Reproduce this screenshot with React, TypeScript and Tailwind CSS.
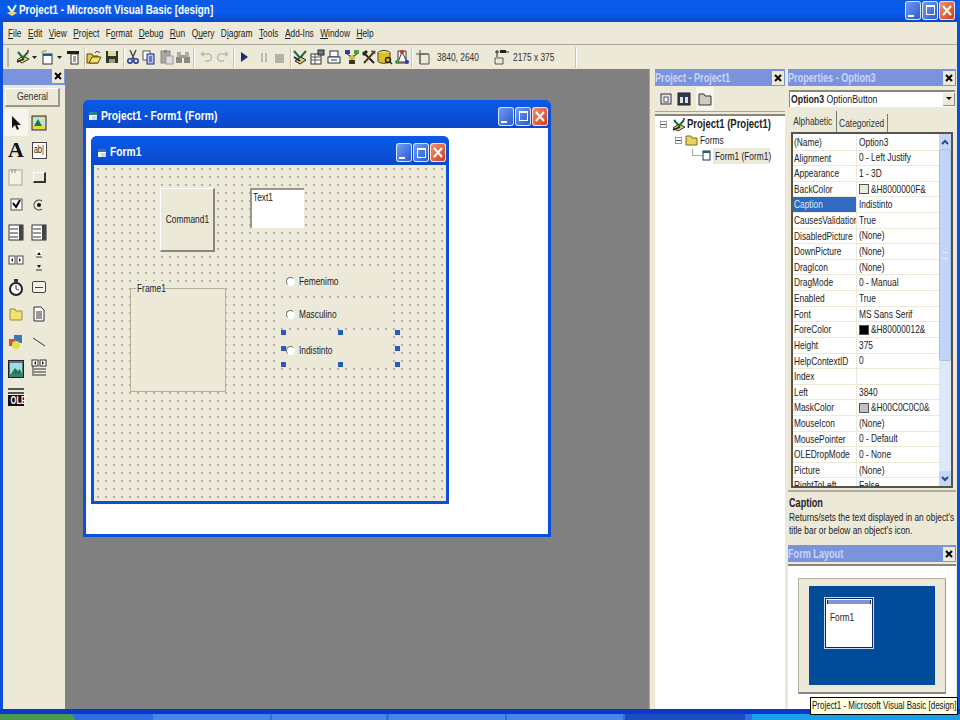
import type { ReactNode } from 'react';

// the screenshot is squeezed horizontally, so text gets squeezed the same way
function S({ children, center = false }: { children: ReactNode; center?: boolean }) {
  return (
    <span className={`inline-block shrink-0 whitespace-nowrap scale-x-[0.76] ${center ? 'origin-center' : 'origin-left'}`}>
      {children}
    </span>
  );
}

function Svg({ children, w = 16, h = 16, className = '' }: { children: ReactNode; w?: number; h?: number; className?: string }) {
  return (
    <svg width={w} height={h} viewBox={`0 0 ${w} ${h}`} className={`shrink-0 ${className}`}>
      {children}
    </svg>
  );
}

function VbIcon() {
  return (
    <Svg>
      <path d="M2 11l5 3 7-4-6-3z" fill="#e8d060" stroke="#333" />
      <path d="M3 3l5 6 5-6" fill="none" stroke="#1c6b3a" strokeWidth="2" />
      <path d="M2 13l7-3" stroke="#222" strokeWidth="1.5" />
      <rect x="12" y="1" width="2" height="2" fill="#d03030" />
    </Svg>
  );
}

function FormIcon() {
  return (
    <Svg>
      <rect x="3" y="5" width="9" height="10" fill="#fff" stroke="#234" />
      <rect x="3" y="5" width="9" height="2" fill="#1f5f8a" />
      <path d="M3 1l1 2M1 3l2 1M6 1L5 3" stroke="#7ac040" strokeWidth="1.3" />
    </Svg>
  );
}

function MenuIcon() {
  return (
    <Svg>
      <rect x="2" y="2" width="12" height="3" fill="#1b1b1b" />
      <rect x="6" y="5" width="7" height="10" fill="#fff" stroke="#333" />
      <path d="M8 8h3M8 10h3M8 12h3" stroke="#444" />
    </Svg>
  );
}

function OpenIcon() {
  return (
    <Svg>
      <path d="M1 5h5l1 2h5v7H1z" fill="#e6c848" stroke="#5a4a10" />
      <path d="M3 14l3-6h9l-3 6z" fill="#f4e070" stroke="#5a4a10" />
      <path d="M9 4c1-2 3-2 5 0" fill="none" stroke="#222" />
    </Svg>
  );
}

function SaveIcon() {
  return (
    <Svg>
      <rect x="2" y="2" width="12" height="12" fill="#2f3a22" />
      <rect x="4" y="2" width="8" height="5" fill="#e0d8a0" />
      <rect x="5" y="10" width="6" height="4" fill="#9a9a88" />
    </Svg>
  );
}

function CutIcon() {
  return (
    <Svg>
      <path d="M5 1l4 9M11 1L7 10" stroke="#444" strokeWidth="1.4" />
      <circle cx="5" cy="12" r="2.2" fill="none" stroke="#2038a8" strokeWidth="1.5" />
      <circle cx="11" cy="12" r="2.2" fill="none" stroke="#2038a8" strokeWidth="1.5" />
    </Svg>
  );
}

function CopyIcon() {
  return (
    <Svg>
      <rect x="2" y="2" width="7" height="9" fill="#fff" stroke="#555" />
      <rect x="6" y="5" width="7" height="10" fill="#b8c8f0" stroke="#1e2a80" />
      <path d="M8 8h3M8 10h3M8 12h3" stroke="#1e2a80" />
    </Svg>
  );
}

function PasteIcon() {
  return (
    <Svg>
      <rect x="2" y="2" width="9" height="12" fill="#aaa99c" stroke="#888" />
      <rect x="5" y="1" width="3" height="3" fill="#888" />
      <rect x="7" y="7" width="7" height="8" fill="#ddd" stroke="#999" />
    </Svg>
  );
}

function FindIcon() {
  return (
    <Svg>
      <rect x="2" y="3" width="4" height="6" fill="#aaa" />
      <rect x="10" y="3" width="4" height="6" fill="#aaa" />
      <rect x="1" y="8" width="6" height="6" fill="#8a8a80" />
      <rect x="9" y="8" width="6" height="6" fill="#8a8a80" />
      <rect x="6" y="6" width="4" height="3" fill="#a09a90" />
    </Svg>
  );
}

function UndoIcon({ flip = false }: { flip?: boolean }) {
  return (
    <Svg className={flip ? '-scale-x-100' : ''}>
      <path d="M4 5h6a3 3 0 0 1 0 7H7" fill="none" stroke="#bdbbad" strokeWidth="1.5" />
      <path d="M6 2v6L2 5z" fill="#bdbbad" />
    </Svg>
  );
}

function ToolbarGroupIcons({ name }: { name: string }) {
  if (name === 'project') {
    return (
      <Svg>
        <path d="M2 2l6 7 6-7" fill="none" stroke="#1c6b3a" strokeWidth="2" />
        <path d="M3 12l5 3 6-4-5-3z" fill="#dcc860" stroke="#223" />
        <path d="M2 8l6 4" stroke="#1a2a6a" strokeWidth="2" />
      </Svg>
    );
  }
  if (name === 'props') {
    return (
      <Svg>
        <rect x="2" y="5" width="10" height="10" fill="#fff" stroke="#333" />
        <path d="M2 8h10M2 11h10M6 5v10" stroke="#555" />
        <rect x="9" y="1" width="6" height="5" fill="#6a7a8a" stroke="#223" />
      </Svg>
    );
  }
  if (name === 'layout') {
    return (
      <Svg>
        <rect x="4" y="2" width="8" height="6" fill="#fff" stroke="#234" />
        <rect x="2" y="8" width="12" height="6" fill="#fff" stroke="#234" />
        <path d="M5 11h6" stroke="#234" />
      </Svg>
    );
  }
  if (name === 'browser') {
    return (
      <Svg>
        <rect x="1" y="1" width="5" height="4" fill="#2a40a0" />
        <rect x="10" y="1" width="5" height="4" fill="#50a030" />
        <rect x="5" y="6" width="6" height="4" fill="#c8c040" />
        <rect x="5" y="11" width="6" height="4" fill="#403820" />
        <path d="M3 5l3 2M13 5l-3 2M8 10v2" stroke="#222" />
      </Svg>
    );
  }
  if (name === 'toolbox') {
    return (
      <Svg>
        <path d="M2 3l11 11" stroke="#222" strokeWidth="2" />
        <path d="M14 2L3 14" stroke="#5a3a14" strokeWidth="2" />
        <path d="M1 5l4-4 2 2-4 4z" fill="#222" />
        <path d="M11 1l4 3-2 1-3-2z" fill="#555" />
      </Svg>
    );
  }
  if (name === 'data') {
    return (
      <Svg>
        <ellipse cx="7" cy="4" rx="6" ry="2.5" fill="#f0d840" stroke="#444" />
        <path d="M1 4v8c0 3 12 3 12 0V4" fill="#e0c020" stroke="#444" />
        <circle cx="11" cy="11" r="2.5" fill="none" stroke="#222" strokeWidth="1.4" />
        <path d="M13 13l2 2" stroke="#222" strokeWidth="1.5" />
      </Svg>
    );
  }
  return (
    <Svg>
      <path d="M4 2h8v12H4z" fill="#fff" stroke="#333" />
      <path d="M8 3L4 13h9z" fill="none" stroke="#333" />
      <circle cx="8" cy="3" r="2" fill="#c03030" />
      <circle cx="3" cy="13" r="2" fill="#30a040" />
      <circle cx="13" cy="13" r="2" fill="#2038c0" />
    </Svg>
  );
}

function Sep() {
  return <div className="w-[2px] h-[21px] bg-[#c8c4b0] border-r border-white shrink-0" />;
}

function Arrow() {
  return (
    <Svg w={7} h={16}>
      <path d="M1 7h5L3.500 10z" fill="#222" />
    </Svg>
  );
}

function Toolbar() {
  return (
    <div className="h-[25px] shrink-0 flex items-center pl-[4px] bg-[#ece9d8] border-t border-[#aca899] text-[#333]">
      <div className="w-[2px] h-[19px] bg-[#b8b4a0] mr-[6px]" />
      <VbIcon />
      <Arrow />
      <div className="w-[2px]" />
      <FormIcon />
      <Arrow />
      <div className="w-[2px]" />
      <MenuIcon />
      <div className="w-[3px]" />
      <Sep />
      <OpenIcon />
      <div className="w-[2px]" />
      <SaveIcon />
      <div className="w-[3px]" />
      <Sep />
      <CutIcon />
      <CopyIcon />
      <div className="w-[2px]" />
      <PasteIcon />
      <FindIcon />
      <div className="w-[2px]" />
      <Sep />
      <div className="w-[3px]" />
      <UndoIcon />
      <div className="w-[1px]" />
      <UndoIcon flip />
      <div className="w-[2px]" />
      <Sep />
      <div className="w-[2px]" />
      <Svg>
        <path d="M4 3l7 5-7 5z" fill="#1a2a78" />
      </Svg>
      <div className="w-[3px]" />
      <Svg>
        <path d="M5 4h2v9H5zM9 4h2v9H9z" fill="#bdbbad" />
      </Svg>
      <Svg>
        <rect x="3" y="5" width="9" height="9" fill="#b4b2a4" />
      </Svg>
      <div className="w-[2px]" />
      <Sep />
      <ToolbarGroupIcons name="project" />
      <div className="w-[1px]" />
      <ToolbarGroupIcons name="props" />
      <div className="w-[1px]" />
      <ToolbarGroupIcons name="layout" />
      <div className="w-[2px]" />
      <ToolbarGroupIcons name="browser" />
      <div className="w-[1px]" />
      <ToolbarGroupIcons name="toolbox" />
      <ToolbarGroupIcons name="data" />
      <div className="w-[1px]" />
      <ToolbarGroupIcons name="comp" />
      <div className="w-[1px]" />
      <Sep />
      <div className="w-[2px]" />
      <Svg>
        <path d="M1 5h12M5 1v14M5 5h9v10H5z" fill="none" stroke="#555" />
      </Svg>
      <div className="ml-[6px] w-[56px] text-[11px]"><S>3840, 2640</S></div>
      <Svg>
        <path d="M2 9h8v6H2z" fill="none" stroke="#555" />
        <path d="M4 1v7M2 3h4M11 3h5" stroke="#222" />
        <rect x="7" y="1" width="6" height="3" fill="#222" />
      </Svg>
      <div className="ml-[4px] w-[62px] text-[11px]"><S>2175 x 375</S></div>
      <Sep />
    </div>
  );
}

function WinButtons() {
  const base = 'w-[16px] h-[19px] rounded-[3px] border border-white/80 flex items-center justify-center';
  return (
    <div className="flex gap-[1px] items-center">
      <div className={`${base} bg-gradient-to-br from-[#6f9cf0] to-[#2a5ad0] items-end pb-[2px] justify-start pl-[2px]`}>
        <div className="w-[6px] h-[2px] bg-white" />
      </div>
      <div className={`${base} bg-gradient-to-br from-[#6f9cf0] to-[#2a5ad0]`}>
        <div className="w-[9px] h-[10px] border border-white border-t-2" />
      </div>
      <div className={`${base} bg-gradient-to-br from-[#f09070] to-[#d03a10]`}>
        <svg width="10" height="11" viewBox="0 0 10 11">
          <path d="M1 1l8 9M9 1l-8 9" stroke="#fff" strokeWidth="2" />
        </svg>
      </div>
    </div>
  );
}

function WinIcon() {
  return (
    <Svg w={10} h={10}>
      <rect x="1" y="1" width="8" height="8" fill="#fff" />
      <rect x="1" y="1" width="8" height="3" fill="#2f7f90" />
      <rect x="4" y="5" width="5" height="4" fill="#c8d8e8" />
    </Svg>
  );
}

function DockTitle({ label }: { label: string }) {
  return (
    <div className="h-[17px] shrink-0 bg-[#7b93dd] flex items-center justify-between text-[#c8d6f8] text-[12px] font-bold leading-none">
      <S>{label}</S>
      <CloseBox />
    </div>
  );
}

function CloseBox() {
  return (
    <div className="w-[12px] h-[14px] bg-[#ece9d8] flex items-center justify-center mr-[1px]">
      <svg width="8" height="8" viewBox="0 0 8 8">
        <path d="M1 1l6 6M7 1L1 7" stroke="#000" strokeWidth="2" />
      </svg>
    </div>
  );
}

function Toolbox() {
  const cell = 'flex items-center justify-center';
  return (
    <div className="w-[62px] shrink-0 bg-[#ece9d8] flex flex-col">
      <div className="h-[16px] bg-[#7b93dd] flex justify-end">
        <CloseBox />
      </div>
      <div className="mt-[3px] ml-[2px] w-[55px] h-[19px] bg-[#ece9d8] border-t border-l border-white border-r-2 border-b-2 border-r-[#9a9788] border-b-[#9a9788] text-[11.500px] text-[#333] flex items-center justify-center">
        <S center>General</S>
      </div>
      <div className="mt-[2px] ml-[1px] grid grid-cols-[24px_22px] auto-rows-[27.400px]">
        <div className={`${cell} bg-[#f6f5ee]`}>
          <Svg>
            <path d="M4 1v12l3-3 2 5 2-1-2-4h4z" fill="#111" />
          </Svg>
        </div>
        <div className={cell}>
          <Svg>
            <rect x="1" y="1" width="14" height="14" fill="#e8d838" stroke="#225" />
            <rect x="2" y="3" width="12" height="8" fill="#bfe0f0" />
            <path d="M3 11l4-7 4 7z" fill="#1a7a40" />
            <circle cx="12" cy="5" r="2" fill="#f0e060" />
          </Svg>
        </div>
        <div className={`${cell} text-[22px] font-bold text-[#111] [font-family:'Liberation_Serif',serif] leading-none`}>A</div>
        <div className={cell}>
          <div className="w-[15px] h-[17px] bg-white border border-[#444] text-[10px] leading-none flex items-center justify-center text-[#222]"><S center>ab|</S></div>
        </div>
        <div className={cell}>
          <Svg h={18}>
            <rect x="1" y="2" width="13" height="15" fill="#f4f2e6" stroke="#aaa78f" />
            <path d="M4 1v4M7 1v4" stroke="#888" />
          </Svg>
        </div>
        <div className={cell}>
          <div className="w-[13px] h-[11px] border-r-2 border-b-2 border-[#333] bg-[#ece9d8] border-t border-l border-t-white border-l-white" />
        </div>
        <div className={cell}>
          <Svg>
            <rect x="3" y="2" width="11" height="11" fill="#fff" stroke="#555" />
            <path d="M5 6l3 4 4-7" fill="none" stroke="#000" strokeWidth="2" />
          </Svg>
        </div>
        <div className={cell}>
          <Svg>
            <path d="M11 4a5 5 0 1 0 0 8" fill="none" stroke="#555" strokeWidth="1.200" />
            <circle cx="8" cy="8" r="2" fill="#111" />
          </Svg>
        </div>
        {[0, 1].map(i => (
          <div key={i} className={cell}>
            <Svg h={17} w={16}>
              <rect x="1" y="1" width="14" height="15" fill="#fff" stroke="#333" />
              <path d="M2 5h8M2 9h8M2 13h8" stroke="#333" />
              <rect x="11" y="1" width="4" height="15" fill="#444" />
            </Svg>
          </div>
        ))}
        <div className={cell}>
          <Svg h={10}>
            <rect x="1" y="1" width="6" height="8" fill="#fff" stroke="#444" />
            <rect x="9" y="1" width="6" height="8" fill="#fff" stroke="#444" />
            <path d="M5 3v4L3 5zM11 3v4l2-2z" fill="#111" />
          </Svg>
        </div>
        <div className={cell}>
          <Svg w={10} h={22}>
            <rect x="2" y="1" width="6" height="7" fill="#fff" />
            <path d="M2 8h6M2 21h6" stroke="#333" />
            <path d="M3 6l2-3 2 3zM3 16l2 3 2-3z" fill="#111" />
          </Svg>
        </div>
        <div className={cell}>
          <Svg h={20}>
            <circle cx="8" cy="12" r="6" fill="#fff" stroke="#222" strokeWidth="2" />
            <path d="M8 12V8M8 12l3 1" stroke="#444" />
            <rect x="6" y="2" width="4" height="3" fill="#333" />
          </Svg>
        </div>
        <div className={cell}>
          <div className="w-[14px] h-[12px] bg-[#f4f2e6] border border-[#444] rounded-[2px] flex items-center justify-center">
            <div className="w-[8px] h-[1px] bg-[#444]" />
          </div>
        </div>
        <div className={cell}>
          <Svg>
            <path d="M2 3h5l1 2h6v9H2z" fill="#f0e070" stroke="#a09030" />
          </Svg>
        </div>
        <div className={cell}>
          <Svg>
            <path d="M3 1h7l3 3v11H3z" fill="#fff" stroke="#333" />
            <path d="M5 6h6M5 8h6M5 10h6M5 12h6" stroke="#333" />
          </Svg>
        </div>
        <div className={cell}>
          <Svg>
            <rect x="6" y="1" width="8" height="8" fill="#3a78b0" />
            <rect x="1" y="5" width="7" height="7" fill="#d05050" />
            <circle cx="8" cy="11" r="4" fill="#e8e040" />
          </Svg>
        </div>
        <div className={cell}>
          <Svg>
            <path d="M2 4l12 8" stroke="#333" />
          </Svg>
        </div>
        <div className={cell}>
          <Svg h={18} w={16}>
            <rect x="0.500" y="0.500" width="15" height="17" fill="#4a7a80" stroke="#222" />
            <rect x="2" y="3" width="12" height="11" fill="#a8d8e8" />
            <path d="M3 14l4-6 3 3 2-2 2 5z" fill="#1a8040" />
          </Svg>
        </div>
        <div className={cell}>
          <Svg h={20}>
            <rect x="1" y="1" width="6" height="6" fill="#fff" stroke="#333" />
            <rect x="9" y="1" width="6" height="6" fill="#fff" stroke="#333" />
            <path d="M5 2v4L3 4zM11 2v4l2-2z" fill="#111" />
            <path d="M3 10h12M3 13h12M3 16h12M2 7v10" stroke="#333" />
          </Svg>
        </div>
        <div className={cell}>
          <div className="w-[16px] h-[18px] flex flex-col justify-end border-t-[6px] border-double border-[#555]">
            <div className="bg-[#111] text-white text-[10px] font-bold leading-[11px] text-center"><S center>OLE</S></div>
          </div>
        </div>
      </div>
    </div>
  );
}

function Radio({ label, className }: { label: string; className: string }) {
  return (
    <div className={`absolute left-[185px] w-[114px] bg-[#ece9d8] flex items-center ${className}`}>
      <div className="ml-[7px] w-[9px] h-[9px] rounded-full bg-white border border-[#777] border-b-white border-r-white" />
      <div className="ml-[4px] text-[11px] text-[#222]"><S>{label}</S></div>
    </div>
  );
}

function Handle({ className }: { className: string }) {
  return <div className={`absolute w-[5px] h-[5px] bg-[#2b59b8] ${className}`} />;
}

function FormWindow() {
  return (
    <div className="absolute left-[18px] top-[31px] w-[468px] h-[437px] bg-[#0a50dc] rounded-t-[6px] p-[3px] pt-0 flex flex-col">
      <div className="h-[28px] shrink-0 flex items-center justify-between pt-[4px] -mx-[3px] pl-[5px] pr-[3px] rounded-t-[6px] bg-gradient-to-b from-[#0a5ae8] to-[#0a48cc]">
        <div className="flex items-center gap-[3px] text-white text-[13.500px] font-bold">
          <WinIcon />
          <S>Project1 - Form1 (Form)</S>
        </div>
        <WinButtons />
      </div>
      <div className="flex-1 bg-white pl-[5px] pt-[8px] relative">
        <div className="w-[358px] h-[368px] bg-[#0a50dc] rounded-t-[6px] p-[3px] pt-0 flex flex-col">
          <div className="h-[29px] shrink-0 flex items-center justify-between pt-[4px] -mx-[3px] pl-[6px] pr-[3px] rounded-t-[6px] bg-gradient-to-b from-[#0a5ae8] to-[#0a48cc]">
            <div className="flex items-center gap-[3px] text-white text-[13.500px] font-bold">
              <WinIcon />
              <S>Form1</S>
            </div>
            <WinButtons />
          </div>
          <div className="relative flex-1 bg-[#ece9d8] bg-[radial-gradient(#6e6c62_0.6px,transparent_0.8px)] bg-[length:8px_8px] bg-[position:0_0]">
            <div className="absolute left-[66px] top-[23px] w-[55px] h-[64px] bg-[#ece9d8] border-t border-l border-white border-r-2 border-b-2 border-r-[#8a8778] border-b-[#8a8778] flex items-center justify-center text-[11px] text-[#222]">
              <S center>Command1</S>
            </div>
            <div className="absolute left-[156px] top-[23px] w-[54px] h-[40px] bg-white border-t-2 border-l-2 border-[#9a9788] text-[11px] text-[#222] pl-[1px] leading-[14px]">
              <S>Text1</S>
            </div>
            <div className="absolute left-[36px] top-[123px] w-[96px] h-[104px] bg-[#ece9d8] border border-[#b4b09c]">
              <div className="absolute -top-[8px] left-[5px] w-[28px] bg-[#ece9d8] pl-[1px] text-[11px] leading-[14px] text-[#222]"><S>Frame1</S></div>
            </div>
            <Radio label="Femenimo" className="top-[107px] h-[19px]" />
            <Radio label="Masculino" className="top-[139px] h-[20px]" />
            <Radio label="Indistinto" className="top-[170px] h-[30px]" />
            <Handle className="left-[187px] top-[165px]" />
            <Handle className="left-[244px] top-[165px]" />
            <Handle className="left-[301px] top-[165px]" />
            <Handle className="left-[187px] top-[181px]" />
            <Handle className="left-[301px] top-[181px]" />
            <Handle className="left-[187px] top-[197px]" />
            <Handle className="left-[244px] top-[197px]" />
            <Handle className="left-[301px] top-[197px]" />
          </div>
        </div>
      </div>
    </div>
  );
}

function ProjectPanel() {
  return (
    <div className="w-[130px] shrink-0 flex flex-col ml-[5px]">
      <DockTitle label="Project - Project1" />
      <div className="h-[26px] shrink-0 flex items-center pl-[3px] gap-[2px] border-b border-[#aca899]">
        <Svg>
          <rect x="3" y="3" width="10" height="10" fill="#dfe3ea" stroke="#333" />
          <rect x="6" y="6" width="4" height="5" fill="#fff" stroke="#555" />
        </Svg>
        <Svg>
          <rect x="2" y="2" width="12" height="12" fill="#2d3a4f" stroke="#222" />
          <rect x="4" y="6" width="3" height="6" fill="#dde" />
          <rect x="9" y="6" width="3" height="6" fill="#dde" />
        </Svg>
        <div className="w-[18px] h-[23px] bg-[#f6f5ee] flex items-center justify-center ml-[2px]">
          <Svg>
            <path d="M2 3h5l1 2h6v9H2z" fill="#cfccc0" stroke="#333" />
          </Svg>
        </div>
      </div>
      <div className="flex-1 mt-[2px] bg-white border-t-2 border-[#8a8778] text-[#222] pt-[1px]">
        <div className="flex items-center h-[15.500px] pl-[5px]">
          <div className="w-[7px] h-[7px] border border-[#999] flex items-center justify-center">
            <div className="w-[5px] h-[1px] bg-[#555]" />
          </div>
          <div className="ml-[4px]"><VbIcon /></div>
          <div className="text-[12.500px] font-bold"><S>Project1 (Project1)</S></div>
        </div>
        <div className="flex items-center h-[15.500px] pl-[20px]">
          <div className="w-[7px] h-[7px] border border-[#999] flex items-center justify-center">
            <div className="w-[5px] h-[1px] bg-[#555]" />
          </div>
          <div className="ml-[3px]">
            <Svg h={12} w={13}>
              <path d="M1 2h5l1 2h5v7H1z" fill="#e8d258" stroke="#7a6a20" />
            </Svg>
          </div>
          <div className="ml-[2px] text-[11px]"><S>Forms</S></div>
        </div>
        <div className="flex items-center h-[15.500px] pl-[37px]">
          <div className="w-[10px] h-[7px] border-l border-b border-[#aaa] -mt-[7px]" />
          <Svg h={12} w={10}>
            <rect x="1" y="1" width="7" height="9" fill="#fff" stroke="#234" />
            <rect x="1" y="1" width="7" height="2" fill="#1f5f8a" />
          </Svg>
          <div className="ml-[1px] w-[57px] pl-[2px] bg-[#ece9d8] text-[11px]"><S>Form1 (Form1)</S></div>
        </div>
      </div>
    </div>
  );
}

const props: [string, string, string?][] = [
  ['(Name)', 'Option3'],
  ['Alignment', '0 - Left Justify'],
  ['Appearance', '1 - 3D'],
  ['BackColor', '&H8000000F&', 'bg-[#ece9d8]'],
  ['Caption', 'Indistinto'],
  ['CausesValidation', 'True'],
  ['DisabledPicture', '(None)'],
  ['DownPicture', '(None)'],
  ['DragIcon', '(None)'],
  ['DragMode', '0 - Manual'],
  ['Enabled', 'True'],
  ['Font', 'MS Sans Serif'],
  ['ForeColor', '&H80000012&', 'bg-black'],
  ['Height', '375'],
  ['HelpContextID', '0'],
  ['Index', ''],
  ['Left', '3840'],
  ['MaskColor', '&H00C0C0C0&', 'bg-[#c0c0c0]'],
  ['MouseIcon', '(None)'],
  ['MousePointer', '0 - Default'],
  ['OLEDropMode', '0 - None'],
  ['Picture', '(None)'],
  ['RightToLeft', 'False'],
];

function PropertiesPanel() {
  return (
    <div className="w-[168px] shrink-0 flex flex-col ml-[3px]">
      <DockTitle label="Properties - Option3" />
      <div className="mt-[4px] mx-[1px] h-[17px] shrink-0 bg-white border-t-2 border-l border-[#8a8778] flex items-center text-[11.500px] text-[#222] overflow-hidden">
        <div className="ml-[1px] w-[140px] overflow-visible"><S><b>Option3</b> OptionButton</S></div>
        <div className="ml-auto w-[12px] h-[13px] bg-[#ece9d8] border-r border-b border-[#888] flex items-center justify-center">
          <svg width="6" height="4" viewBox="0 0 6 4"><path d="M0 0h6L3 3z" fill="#111" /></svg>
        </div>
      </div>
      <div className="mt-[4px] h-[21px] shrink-0 flex items-end pl-[1px] text-[11px] text-[#333]">
        <div className="h-[21px] w-[48px] flex items-center justify-center border-r border-[#777]"><S center>Alphabetic</S></div>
        <div className="h-[18px] w-[51px] flex items-center justify-center border-r border-[#777]"><S center>Categorized</S></div>
      </div>
      <div className="h-[356px] shrink-0 mx-[3px] border-2 border-t-2 border-[#55544c] bg-white flex overflow-hidden relative">
        <div className="flex-1 overflow-hidden text-[11px] text-[#222] pt-[1px]">
          {props.map(([k, v, swatch]) => (
            <div key={k} className="h-[15.620px] flex border-b border-[#ece9d8] leading-[15px]">
              <div className={`w-[64px] shrink-0 pl-[1px] border-r border-[#ece9d8] overflow-hidden ${k === 'Caption' ? 'bg-[#2f6bc0] text-[#dfe8f8]' : ''}`}><S>{k}</S></div>
              <div className="pl-[2px] flex items-center min-w-0">
                {swatch && <span className={`w-[10px] h-[10px] shrink-0 border border-[#555] mr-[2px] ${swatch}`} />}
                <S>{v}</S>
              </div>
            </div>
          ))}
        </div>
        <div className="w-[12px] shrink-0 bg-[#dde8fb] flex flex-col items-center">
          <div className="w-[12px] h-[15px] bg-[#c6d6f8] flex items-center justify-center">
            <svg width="8" height="6" viewBox="0 0 8 6"><path d="M1 5l3-3 3 3" fill="none" stroke="#2a4a90" strokeWidth="2" /></svg>
          </div>
          <div className="w-[12px] h-[212px] bg-[#c3d4fa] rounded-[2px] border border-[#a8c0f0] flex items-center justify-center">
            <div className="w-[6px] h-[7px] border-y border-[#e8f0ff]" />
          </div>
          <div className="mt-auto w-[12px] h-[15px] bg-[#c6d6f8] flex items-center justify-center">
            <svg width="8" height="6" viewBox="0 0 8 6"><path d="M1 1l3 3 3-3" fill="none" stroke="#2a4a90" strokeWidth="2" /></svg>
          </div>
        </div>
      </div>
      <div className="h-[55px] shrink-0 px-[1px] pt-[5px] border-t-2 mt-[2px] border-[#b0ad9c] text-[11px] leading-[13px] text-[#222]">
        <div className="font-bold text-[12px]"><S>Caption</S></div>
        <div className="mt-[1px]"><S>Returns/sets the text displayed in an object's</S></div>
        <div><S>title bar or below an object's icon.</S></div>
      </div>
      <DockTitle label="Form Layout" />
      <div className="flex-1 mt-[2px] bg-white border-t-2 border-[#8a8778] pt-[12px] pl-[10px] overflow-hidden">
        <div className="w-[148px] h-[116px] bg-[#ece9d8] border border-[#b4b09c] border-r-[#999] border-b-2 border-b-[#888] pt-[7px] pl-[10px]">
          <div className="w-[126px] h-[99px] bg-[#004c99] pt-[11px] pl-[15px]">
            <div className="w-[50px] h-[52px] bg-white border border-[#c8dcff] outline outline-1 -outline-offset-2 outline-[#14245c] flex flex-col p-[2px]">
              <div className="h-[4px] bg-[#7b93dd] border-x border-[#14245c]" />
              <div className="text-[11px] text-[#222] pl-[3px] mt-[5px]"><S>Form1</S></div>
            </div>
          </div>
        </div>
      </div>
    </div>
  );
}

export default function App() {
  return (
    <div className="[font-family:'Liberation_Sans',sans-serif] relative w-[960px] h-[720px] overflow-hidden flex flex-col bg-[#0a50dc]">
      <div className="h-[22px] shrink-0 bg-gradient-to-b from-[#0a5ae6] via-[#0a5cf0] to-[#0a48c8] flex items-center justify-between pl-[6px] pr-[5px] pb-[2px]">
        <div className="flex items-center gap-[1px] text-white text-[13px] font-bold">
          <Svg w={12} h={14}>
            <path d="M2 3l4 6 4-7" fill="none" stroke="#dfe" strokeWidth="2" />
            <path d="M1 10l5 3 5-3-5-2z" fill="#e8d080" />
          </Svg>
          <S>Project1 - Microsoft Visual Basic [design]</S>
        </div>
        <WinButtons />
      </div>
      <div className="flex-1 min-h-0 flex flex-col mx-[3px] bg-[#ece9d8]">
        <div className="h-[22px] shrink-0 pl-[5px] flex items-center">
          <div className="flex items-center gap-[8.500px] text-[11px] text-[#222] origin-left scale-x-[0.76] whitespace-nowrap">
            <span><u>F</u>ile</span>
            <span><u>E</u>dit</span>
            <span><u>V</u>iew</span>
            <span><u>P</u>roject</span>
            <span>F<u>o</u>rmat</span>
            <span><u>D</u>ebug</span>
            <span><u>R</u>un</span>
            <span>Q<u>u</u>ery</span>
            <span>D<u>i</u>agram</span>
            <span><u>T</u>ools</span>
            <span><u>A</u>dd-Ins</span>
            <span><u>W</u>indow</span>
            <span><u>H</u>elp</span>
          </div>
        </div>
        <Toolbar />
        <div className="flex-1 min-h-0 flex">
          <Toolbox />
          <div className="relative w-[585px] shrink-0 bg-[#808080] border-r border-[#aca899]">
            <FormWindow />
          </div>
          <ProjectPanel />
          <PropertiesPanel />
        </div>
      </div>
      <div className="h-[5px] shrink-0 bg-[#0a38c8]" />
      <div className="h-[6px] shrink-0 bg-[#2f6de0] flex">
        <div className="w-[75px] bg-[#4a9a50] rounded-tr-[6px]" />
        <div className="ml-[78px] w-[117px] bg-[#4a86e8]" />
        <div className="ml-[2px] w-[114px] bg-[#4a86e8]" />
        <div className="ml-[3px] w-[116px] bg-[#4a86e8]" />
        <div className="ml-[2px] w-[116px] bg-[#4a86e8]" />
        <div className="ml-[2px] w-[120px] bg-[#1c4cc0]" />
        <div className="ml-[7px] flex-1 bg-[#18a0e8]" />
      </div>
      <div className="absolute left-[810px] top-[697px] w-[148px] h-[18px] pl-[1px] bg-[#ffffe1] border border-black text-[10.500px] text-[#111] flex items-center overflow-hidden">
        <S>Project1 - Microsoft Visual Basic [design]</S>
      </div>
    </div>
  );
}
